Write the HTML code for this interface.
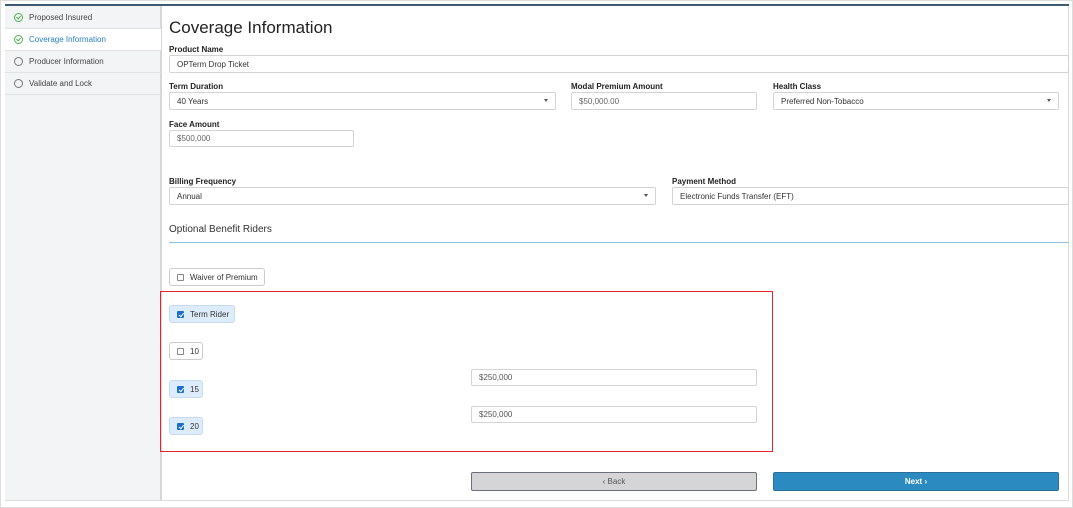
<!DOCTYPE html>
<html><head><meta charset="utf-8"><style>
*{box-sizing:border-box;margin:0;padding:0}
body{width:1073px;height:508px;background:#fff;font-family:"Liberation Sans",sans-serif;color:#333;position:relative;overflow:hidden}
.a{position:absolute}
.frame{left:0;top:0;width:1073px;height:508px;border:1px solid #ddd}
.lbl{font-size:8px;font-weight:bold;color:#222}
.in{border:1px solid #d4d4d4;border-radius:2px;font-size:8px;padding-left:7px;display:flex;align-items:center;background:#fff;color:#333}
.caret{position:absolute;right:7px;top:6px;width:0;height:0;border-left:2.5px solid transparent;border-right:2.5px solid transparent;border-top:3px solid #555}
.item{left:5px;width:156px;height:22px;border-bottom:1px solid #e2e3e6;font-size:8px;display:flex;align-items:center;padding-left:24px;color:#444}
.ic{position:absolute;left:9px;top:6px;width:9px;height:9px;border-radius:50%;border:1px solid #777}
.ic.ok{border:1.3px solid #4caf50}
.ic.ok:after{content:"";position:absolute;left:2px;top:1px;width:2px;height:3px;border-right:1.2px solid #4caf50;border-bottom:1.2px solid #4caf50;transform:rotate(40deg)}
.cb{border:1px solid #ccc;border-radius:3px;font-size:8px;display:flex;align-items:center;padding-left:7px;background:#fff}
.cb.on{background:#dcecfb;border-color:#c6dced}
.box{width:7px;height:7px;border:1px solid #888;border-radius:1px;margin-right:6px;background:#fff}
.on .box{background:#1a6fd1;border-color:#1a6fd1;position:relative}
.on .box:after{content:"";position:absolute;left:1.5px;top:0;width:2px;height:3.5px;border-right:1px solid #fff;border-bottom:1px solid #fff;transform:rotate(40deg)}
</style></head><body>
<div class="a frame"></div>
<div class="a" style="left:5px;top:4px;width:1064px;height:2px;background:#3c5a72"></div>
<div class="a" style="left:5px;top:6px;width:156px;height:495px;background:#f3f4f6"></div>
<div class="a" style="left:160px;top:6px;width:2px;height:495px;background:#d6d7da"></div>
<div class="a" style="left:1068px;top:6px;width:1px;height:495px;background:#ddd"></div>
<div class="a" style="left:5px;top:500px;width:1064px;height:1px;background:#ddd"></div>

<div class="a item" style="top:7px"><span class="ic ok"></span>Proposed Insured</div>
<div class="a item" style="top:29px;background:#fff;color:#2b7fc0"><span class="ic ok"></span>Coverage Information</div>
<div class="a item" style="top:51px"><span class="ic"></span>Producer Information</div>
<div class="a item" style="top:73px"><span class="ic"></span>Validate and Lock</div>

<div class="a" style="left:169px;top:18px;font-size:17px;color:#222">Coverage Information</div>

<div class="a lbl" style="left:169px;top:45px">Product Name</div>
<div class="a in" style="left:169px;top:55px;width:900px;height:18px">OPTerm Drop Ticket</div>

<div class="a lbl" style="left:169px;top:82px">Term Duration</div>
<div class="a in" style="left:169px;top:92px;width:387px;height:18px">40 Years<span class="caret"></span></div>
<div class="a lbl" style="left:571px;top:82px">Modal Premium Amount</div>
<div class="a in" style="left:571px;top:92px;width:186px;height:18px;color:#666">$50,000.00</div>
<div class="a lbl" style="left:773px;top:82px">Health Class</div>
<div class="a in" style="left:773px;top:92px;width:286px;height:18px">Preferred Non-Tobacco<span class="caret"></span></div>

<div class="a lbl" style="left:169px;top:120px">Face Amount</div>
<div class="a in" style="left:169px;top:130px;width:185px;height:17px;color:#666">$500,000</div>

<div class="a lbl" style="left:169px;top:177px">Billing Frequency</div>
<div class="a in" style="left:169px;top:187px;width:487px;height:18px">Annual<span class="caret"></span></div>
<div class="a lbl" style="left:672px;top:177px">Payment Method</div>
<div class="a in" style="left:672px;top:187px;width:397px;height:18px">Electronic Funds Transfer (EFT)</div>

<div class="a" style="left:169px;top:224px;font-size:10px;color:#333">Optional Benefit Riders</div>
<div class="a" style="left:169px;top:242px;width:900px;height:1px;background:#8ec0e0"></div>

<div class="a cb" style="left:169px;top:268px;width:96px;height:18px"><span class="box"></span>Waiver of Premium</div>

<div class="a" style="left:160px;top:291px;width:613px;height:161px;border:1.5px solid #e3242b"></div>

<div class="a cb on" style="left:169px;top:305px;width:66px;height:18px"><span class="box"></span>Term Rider</div>
<div class="a cb" style="left:169px;top:342px;width:34px;height:18px"><span class="box"></span>10</div>
<div class="a cb on" style="left:169px;top:380px;width:34px;height:18px"><span class="box"></span>15</div>
<div class="a cb on" style="left:169px;top:417px;width:34px;height:18px"><span class="box"></span>20</div>

<div class="a in" style="left:471px;top:369px;width:286px;height:17px;color:#555">$250,000</div>
<div class="a in" style="left:471px;top:406px;width:286px;height:17px;color:#555">$250,000</div>

<div class="a" style="left:471px;top:472px;width:286px;height:19px;background:#d5d5d8;border:1px solid #6b7178;border-radius:2px;font-size:8px;color:#555;display:flex;align-items:center;justify-content:center">&#x2039; Back</div>
<div class="a" style="left:773px;top:472px;width:286px;height:19px;background:#2b8bc0;border:1px solid #2a6f9a;border-radius:2px;font-size:8px;color:#fff;display:flex;align-items:center;justify-content:center;font-weight:bold">Next &#x203A;</div>
</body></html>
